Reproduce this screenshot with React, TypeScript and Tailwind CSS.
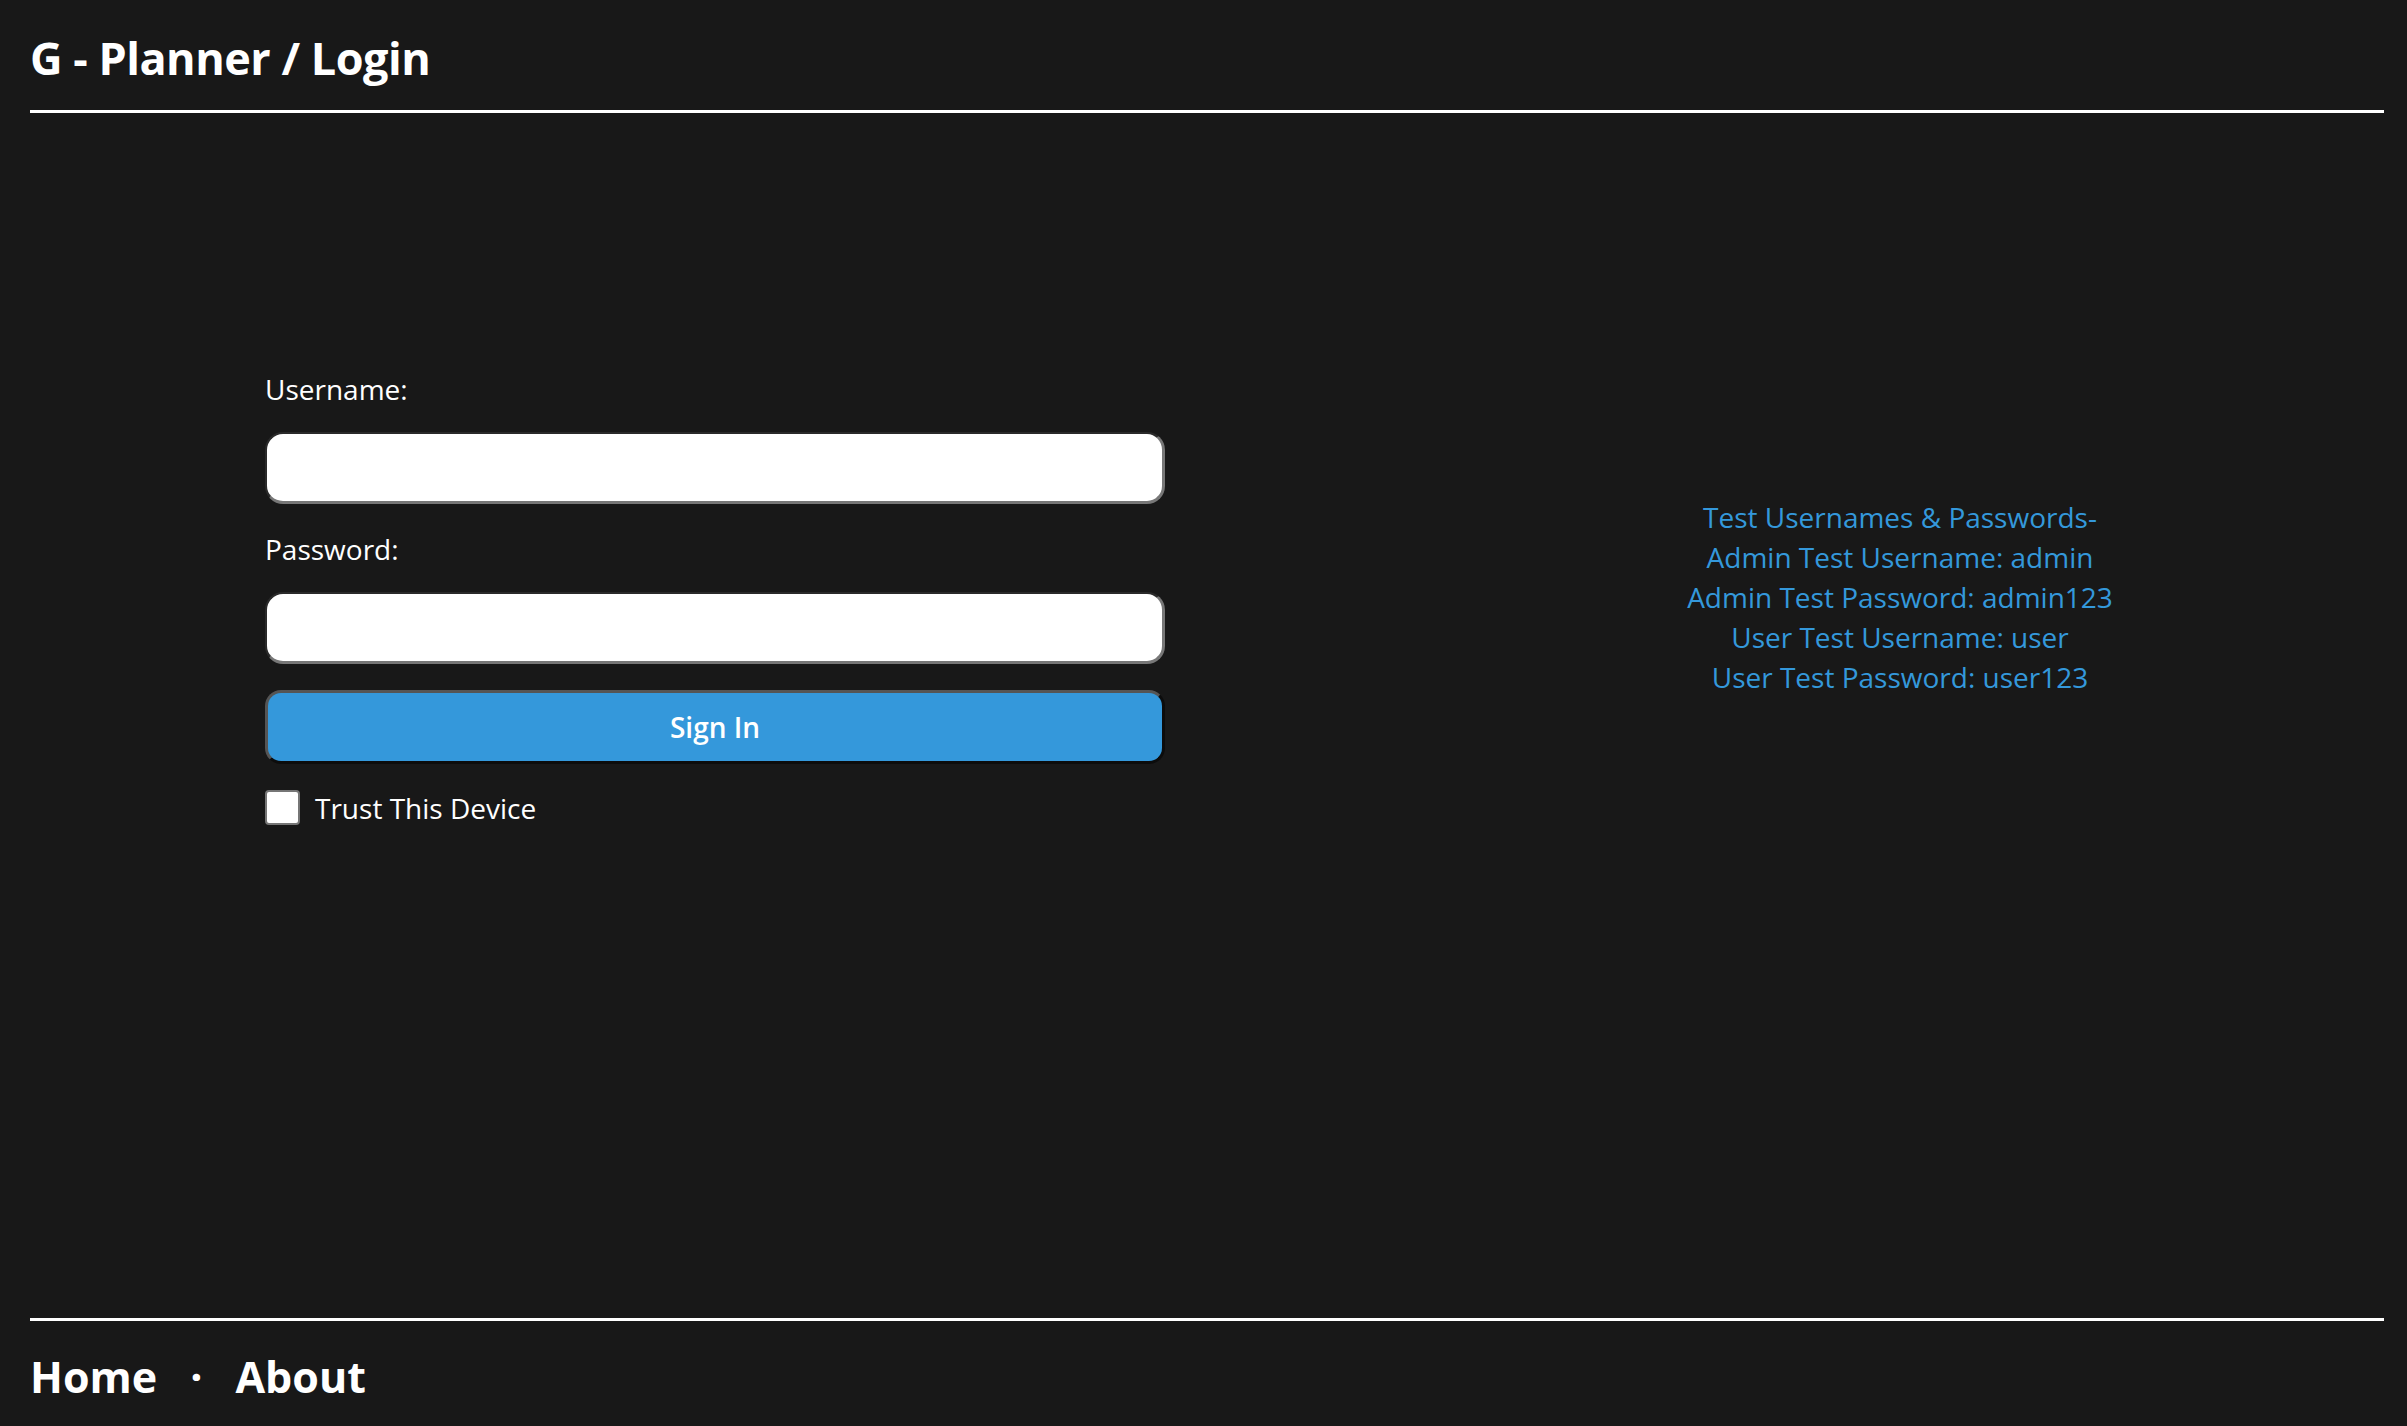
import { useState } from "react";

const LoginPage = () => {
  const [username, setUsername] = useState("");
  const [password, setPassword] = useState("");
  const [trust, setTrust] = useState(false);

  return (
    <div
      className="min-h-screen flex flex-col bg-[#181818] text-white pl-[30px] pr-[23px]"
      style={{ fontFamily: '"Open Sans", "Noto Sans", sans-serif' }}
    >
      {/* HEADER */}
      <header className="pt-[35px] pb-[30px] border-b-[3px] border-white">
        <h1 className="text-[45px] leading-none font-bold tracking-[-0.5px]">
          G - Planner / Login
        </h1>
      </header>

      {/* MAIN */}
      <main className="flex-1 flex items-start pt-[262px]">
        <div className="flex items-center w-full">
          <form
            onSubmit={(e) => e.preventDefault()}
            className="ml-[235px] w-[900px] flex flex-col"
          >
            <Label text="Username:" />
            <Input className="mt-[29px]" value={username} onChange={setUsername} type="text" />

            <Label text="Password:" className="mt-[31px]" />
            <Input className="mt-[29px]" value={password} onChange={setPassword} type="password" />

            <button
              type="submit"
              className="mt-[26px] h-[74px] w-full rounded-[16px] bg-[#3498db] border-[3px] border-t-[#555555] border-l-[#555555] border-b-[#0c0c0c] border-r-[#0c0c0c] text-[28px] leading-none font-semibold text-white"
            >
              Sign In
            </button>

            <label className="mt-[26px] flex items-center gap-[15px] cursor-pointer">
              <input
                type="checkbox"
                checked={trust}
                onChange={(e) => setTrust(e.target.checked)}
                className="appearance-none w-[35px] h-[35px] bg-white border-2 border-[#767676] rounded-[4px] checked:bg-[#3498db]"
              />
              <span className="text-[28px] leading-none">Trust This Device</span>
            </label>
          </form>

          <TestAccounts />
        </div>
      </main>

      {/* FOOTER */}
      <footer className="border-t-[3px] border-white pt-[34px] pb-[28px]">
        <nav className="flex items-center gap-[33px] text-[43px] leading-none font-bold">
          <a href="#">Home</a>
          <span>·</span>
          <a href="#">About</a>
        </nav>
      </footer>
    </div>
  );
};

export default LoginPage;

const Label = ({ text, className = "" }: any) => (
  <label className={`block text-[28px] leading-none ${className}`}>{text}</label>
);

const Input = ({ value, onChange, type, className = "" }: any) => (
  <input
    type={type}
    value={value}
    onChange={(e) => onChange(e.target.value)}
    className={`h-[72px] w-full rounded-[18px] bg-white text-black text-[28px] px-4 outline-none border-t-2 border-l-2 border-b-[3px] border-r-[3px] border-t-[#2a2a2a] border-l-[#2a2a2a] border-b-[#777777] border-r-[#777777] ${className}`}
  />
);

const TestAccounts = () => (
  <div className="flex-1 ml-[251px] mb-[6px] text-center text-[28px] leading-[40px] text-[#3498db]">
    <p>Test Usernames &amp; Passwords-</p>
    <p>Admin Test Username: admin</p>
    <p>Admin Test Password: admin123</p>
    <p>User Test Username: user</p>
    <p>User Test Password: user123</p>
  </div>
);
